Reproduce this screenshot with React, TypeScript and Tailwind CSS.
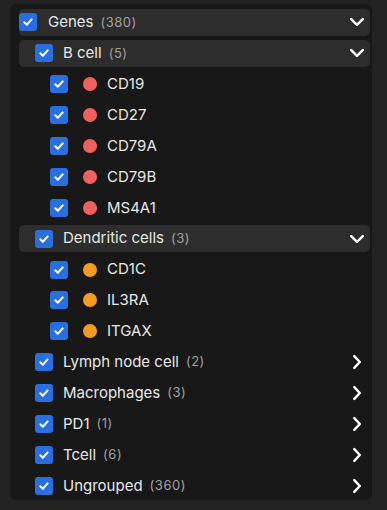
import React from "react";

const Check = () => (
  <div className="w-[18px] h-[18px] rounded-[3px] bg-[#2a6fdf] flex items-center justify-center shrink-0">
    <svg width="12" height="12" viewBox="0 0 12 12" fill="none">
      <path d="M2.3 6.3 L4.8 8.7 L9.7 3.4" stroke="white" strokeWidth="2" strokeLinecap="round" strokeLinejoin="round" />
    </svg>
  </div>
);

const ChevDown = () => (
  <svg width="16" height="16" viewBox="0 0 16 16" fill="none" className="shrink-0">
    <path d="M2.2 5.2 L8 10.8 L13.8 5.2" stroke="white" strokeWidth="2.5" strokeLinecap="round" strokeLinejoin="round" />
  </svg>
);

const ChevRight = () => (
  <svg width="16" height="16" viewBox="0 0 16 16" fill="none" className="shrink-0">
    <path d="M5.3 2.2 L10.8 8 L5.3 13.8" stroke="white" strokeWidth="2.5" strokeLinecap="round" strokeLinejoin="round" />
  </svg>
);

const Count = ({ n }: { n: number }) => (
  <span className="text-[13px] text-[#a0a0a0] tracking-[0.5px] ml-[7px]">({n})</span>
);

const GroupRow = ({
  name,
  n,
  open,
  indent,
  bg,
}: {
  name: string;
  n: number;
  open?: boolean;
  indent: boolean;
  bg: boolean;
}) => (
  <div
    className={`h-[26.9px] flex items-center rounded-[5px] pr-[5px] ${bg ? "bg-[#2d2d2d]" : ""} ${
      indent ? "pl-[16px]" : "pl-0"
    }`}
  >
    <Check />
    <span className="ml-[10px] text-[15px] text-[#e8e8e8]">{name}</span>
    <Count n={n} />
    <div className="flex-1" />
    {open ? <ChevDown /> : <ChevRight />}
  </div>
);

const Leaf = ({ name, color }: { name: string; color: string }) => (
  <div className="h-[26.9px] flex items-center pl-[31px]">
    <Check />
    <div className="w-[14px] h-[14px] rounded-full ml-[15px]" style={{ backgroundColor: color }} />
    <span className="ml-[10px] text-[15px] text-[#e8e8e8]">{name}</span>
  </div>
);

export default function App() {
  const red = "#f25f5f";
  const orange = "#f59c1f";
  return (
    <div
      className="w-[387px] h-[510px] bg-[#232323] pt-[4px] pl-[10px]"
      style={{ fontFamily: "Inter, 'Liberation Sans', sans-serif" }}
    >
      <div className="w-[362px] h-[496px] bg-[#181818] rounded-[6px] pl-[9px] pr-[2px] pt-[5px] flex flex-col gap-[4px]">
        <div className="h-[26.9px] flex items-center rounded-[5px] bg-[#2d2d2d] pr-[5px]">
          <Check />
          <span className="ml-[11px] text-[15px] text-[#e8e8e8]">Genes</span>
          <Count n={380} />
          <div className="flex-1" />
          <ChevDown />
        </div>
        <GroupRow name="B cell" n={5} open indent bg />
        <Leaf name="CD19" color={red} />
        <Leaf name="CD27" color={red} />
        <Leaf name="CD79A" color={red} />
        <Leaf name="CD79B" color={red} />
        <Leaf name="MS4A1" color={red} />
        <GroupRow name="Dendritic cells" n={3} open indent bg />
        <Leaf name="CD1C" color={orange} />
        <Leaf name="IL3RA" color={orange} />
        <Leaf name="ITGAX" color={orange} />
        <GroupRow name="Lymph node cell" n={2} indent bg={false} />
        <GroupRow name="Macrophages" n={3} indent bg={false} />
        <GroupRow name="PD1" n={1} indent bg={false} />
        <GroupRow name="Tcell" n={6} indent bg={false} />
        <GroupRow name="Ungrouped" n={360} indent bg={false} />
      </div>
    </div>
  );
}
